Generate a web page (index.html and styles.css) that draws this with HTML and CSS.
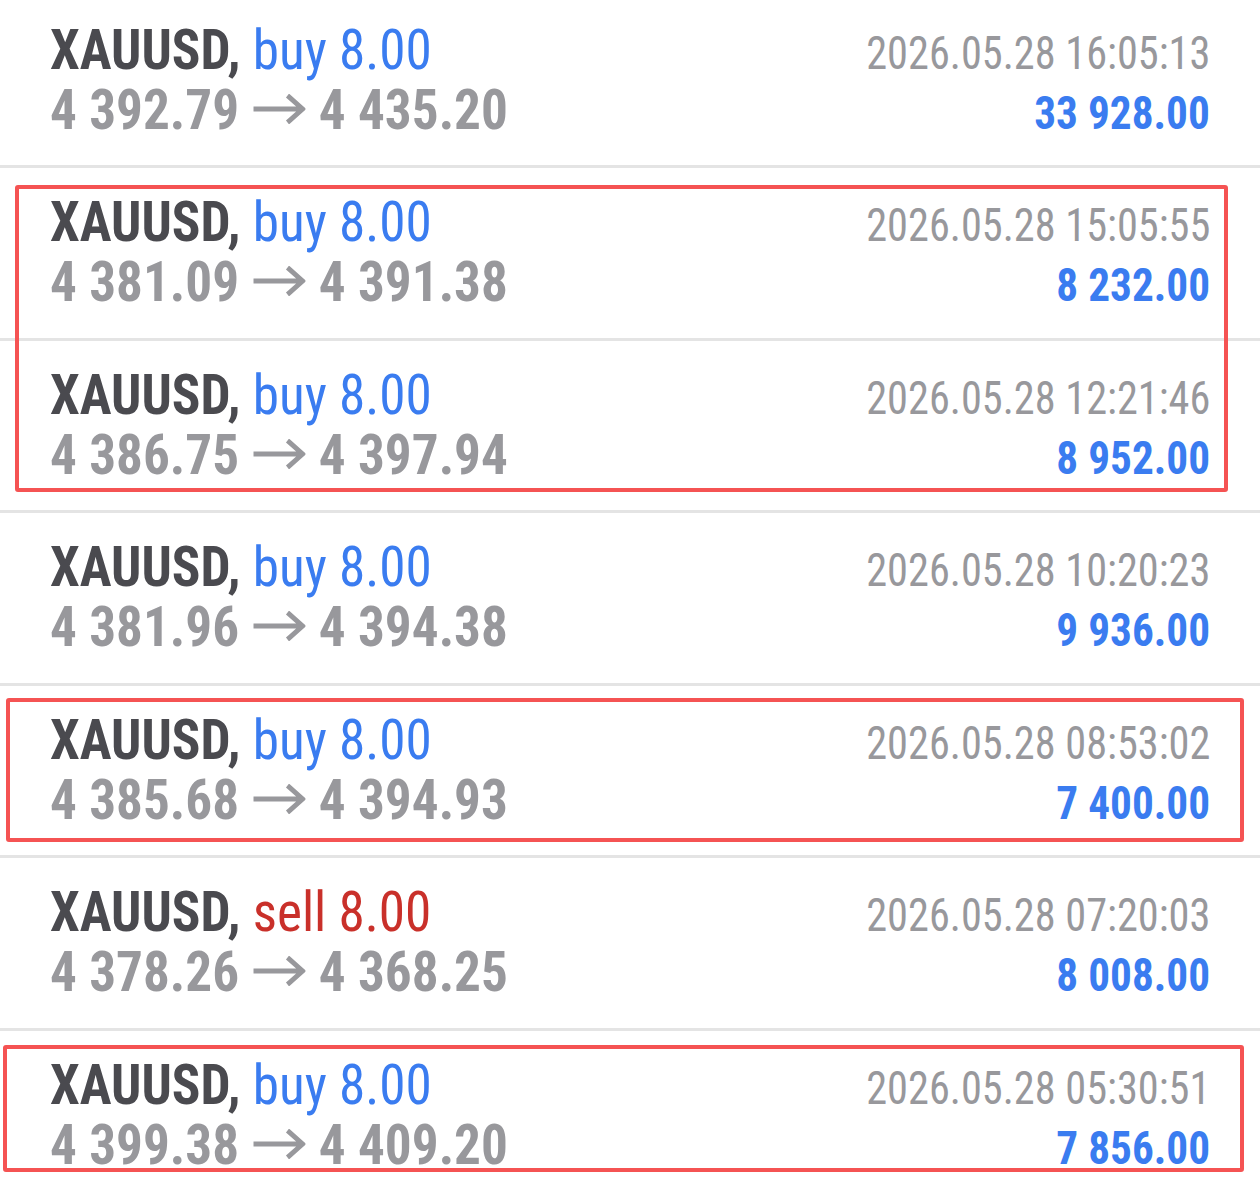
FILE: index.html
```html
<!DOCTYPE html>
<html lang="en">
<head>
<meta charset="utf-8">
<title>History</title>
<link rel="stylesheet" href="styles.css">
</head>
<body>
<div class="page">
  <div class="list">
    <div class="deal">
      <div class="line"><span class="title"><b class="sym">XAUUSD,</b> <span class="buy">buy 8.00</span></span><span class="time">2026.05.28 16:05:13</span></div>
      <div class="line"><span class="prices">4 392.79<svg class="arrow" viewBox="0 0 55 30" width="55" height="30"><path d="M0 15H52M36 1.5L52 15L36 28.5"/></svg>4 435.20</span><span class="profit">33 928.00</span></div>
    </div>
    <div class="deal">
      <div class="line"><span class="title"><b class="sym">XAUUSD,</b> <span class="buy">buy 8.00</span></span><span class="time">2026.05.28 15:05:55</span></div>
      <div class="line"><span class="prices">4 381.09<svg class="arrow" viewBox="0 0 55 30" width="55" height="30"><path d="M0 15H52M36 1.5L52 15L36 28.5"/></svg>4 391.38</span><span class="profit">8 232.00</span></div>
    </div>
    <div class="deal">
      <div class="line"><span class="title"><b class="sym">XAUUSD,</b> <span class="buy">buy 8.00</span></span><span class="time">2026.05.28 12:21:46</span></div>
      <div class="line"><span class="prices">4 386.75<svg class="arrow" viewBox="0 0 55 30" width="55" height="30"><path d="M0 15H52M36 1.5L52 15L36 28.5"/></svg>4 397.94</span><span class="profit">8 952.00</span></div>
    </div>
    <div class="deal">
      <div class="line"><span class="title"><b class="sym">XAUUSD,</b> <span class="buy">buy 8.00</span></span><span class="time">2026.05.28 10:20:23</span></div>
      <div class="line"><span class="prices">4 381.96<svg class="arrow" viewBox="0 0 55 30" width="55" height="30"><path d="M0 15H52M36 1.5L52 15L36 28.5"/></svg>4 394.38</span><span class="profit">9 936.00</span></div>
    </div>
    <div class="deal">
      <div class="line"><span class="title"><b class="sym">XAUUSD,</b> <span class="buy">buy 8.00</span></span><span class="time">2026.05.28 08:53:02</span></div>
      <div class="line"><span class="prices">4 385.68<svg class="arrow" viewBox="0 0 55 30" width="55" height="30"><path d="M0 15H52M36 1.5L52 15L36 28.5"/></svg>4 394.93</span><span class="profit">7 400.00</span></div>
    </div>
    <div class="deal">
      <div class="line"><span class="title"><b class="sym">XAUUSD,</b> <span class="sell">sell 8.00</span></span><span class="time">2026.05.28 07:20:03</span></div>
      <div class="line"><span class="prices">4 378.26<svg class="arrow" viewBox="0 0 55 30" width="55" height="30"><path d="M0 15H52M36 1.5L52 15L36 28.5"/></svg>4 368.25</span><span class="profit">8 008.00</span></div>
    </div>
    <div class="deal">
      <div class="line"><span class="title"><b class="sym">XAUUSD,</b> <span class="buy">buy 8.00</span></span><span class="time">2026.05.28 05:30:51</span></div>
      <div class="line"><span class="prices">4 399.38<svg class="arrow" viewBox="0 0 55 30" width="55" height="30"><path d="M0 15H52M36 1.5L52 15L36 28.5"/></svg>4 409.20</span><span class="profit">7 856.00</span></div>
    </div>
  </div>
  <div class="mark mark-a"></div>
  <div class="mark mark-b"></div>
  <div class="mark mark-c"></div>
</div>
</body>
</html>
```

FILE: styles.css
```css
html, body {
  margin: 0;
  padding: 0;
  background: #ffffff;
}

body {
  font-family: "Roboto Condensed", Roboto, "Liberation Sans", sans-serif;
  font-stretch: condensed;
  overflow: hidden;
}

.page {
  position: relative;
  width: 1260px;
  height: 1179px;
  overflow: hidden;
}

.list {
  margin-top: -4.5px;
  display: flex;
  flex-direction: column;
}

.deal {
  box-sizing: border-box;
  height: 172.5px;
  border-bottom: 3px solid #e4e4e4;
  padding: 24px 50px 0 50px;
  display: flex;
  flex-direction: column;
}

.line {
  display: flex;
  justify-content: space-between;
  align-items: baseline;
  height: 60px;
  line-height: 60px;
  white-space: nowrap;
}

.title {
  font-size: 56px;
  transform: scaleX(0.95);
  transform-origin: left center;
}

.sym {
  font-weight: 700;
  color: #4a4a4f;
}

.buy {
  color: #3a7cf0;
  font-weight: 400;
}

.sell {
  color: #c9302a;
  font-weight: 400;
}

.prices {
  font-size: 56px;
  font-weight: 700;
  color: #98989c;
  transform: scaleX(0.95);
  transform-origin: left center;
}

.arrow {
  width: 55px;
  height: 30px;
  margin: 0 14px 0 15px;
  vertical-align: 5px;
  fill: none;
  stroke: #98989c;
  stroke-width: 5;
}

.time {
  font-size: 47px;
  color: #98989c;
  font-weight: 400;
  transform: scaleX(0.9);
  transform-origin: right center;
}

.profit {
  font-size: 47px;
  font-weight: 700;
  color: #3a7cf0;
  transform: scaleX(0.92);
  transform-origin: right center;
}

.mark {
  position: absolute;
  box-sizing: border-box;
  border: 4px solid #f55353;
  border-radius: 3px;
}

.mark-a {
  left: 15px;
  top: 185px;
  width: 1213px;
  height: 307px;
}

.mark-b {
  left: 6px;
  top: 698px;
  width: 1238px;
  height: 144px;
}

.mark-c {
  left: 3px;
  top: 1045px;
  width: 1241px;
  height: 127px;
}
```
